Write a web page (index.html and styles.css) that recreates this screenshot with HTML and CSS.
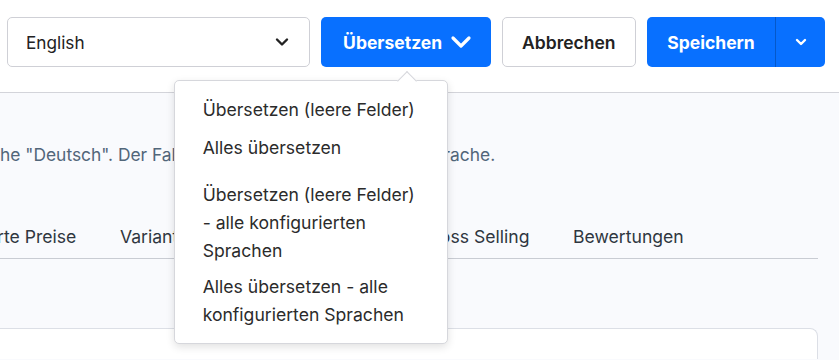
FILE: index.html
```html
<!DOCTYPE html>
<html lang="de">
<head>
    <meta charset="UTF-8">
    <meta name="viewport" content="width=device-width, initial-scale=1.0">
    <title>Produkt bearbeiten</title>
    <link rel="stylesheet" href="styles.css">
</head>
<body>
    <header class="toolbar">
        <div class="lang-select">
            <span>English</span>
            <svg class="lang-caret" width="14" height="10" viewBox="0 0 14 10"><path d="M2 2.5 L7 7.5 L12 2.5" fill="none" stroke="#222" stroke-width="2.4" stroke-linecap="round" stroke-linejoin="round"/></svg>
        </div>
        <div class="translate">
            <button class="btn btn-primary btn-translate">
                Übersetzen
                <svg width="22" height="14" viewBox="0 0 22 14"><path d="M3 3 L11 11 L19 3" fill="none" stroke="#fff" stroke-width="3.2" stroke-linecap="round" stroke-linejoin="round"/></svg>
            </button>
            <ul class="menu">
                <li>Übersetzen (leere Felder)</li>
                <li>Alles übersetzen</li>
                <li class="menu-group">Übersetzen (leere Felder) - alle konfigurierten Sprachen</li>
                <li>Alles übersetzen - alle konfigurierten Sprachen</li>
            </ul>
        </div>
        <button class="btn btn-default">Abbrechen</button>
        <div class="split">
            <button class="btn btn-primary split-main">Speichern</button>
            <button class="btn btn-primary split-toggle">
                <svg width="14" height="10" viewBox="0 0 14 10"><path d="M3 3 L7 7 L11 3" fill="none" stroke="#fff" stroke-width="2.4" stroke-linecap="round" stroke-linejoin="round"/></svg>
            </button>
        </div>
    </header>
    <main class="content">
        <div class="content-inner">
            <p class="lang-info">he "Deutsch". Der Fallback ist jeweils die Standard-Sprache.</p>
            <nav class="tabs">
                <span class="tab tab-first">rte Preise</span>
                <span class="tab">Varianten</span>
                <span class="tab">Layout</span>
                <span class="tab">SEO</span>
                <span class="tab">Cross Selling</span>
                <span class="tab">Bewertungen</span>
            </nav>
            <section class="card"></section>
        </div>
    </main>
</body>
</html>
```
FILE: styles.css
```css
/* Grundlayout */
body {
    margin: 0;
    font-family: 'Inter', 'Noto Sans', sans-serif;
    color: #2b2b2b;
    background: #f9fafd;
    overflow: hidden;
}

.toolbar {
    display: flex;
    gap: 11px;
    height: 50px;
    padding: 17px 14px 25px 7px;
    background: white;
    border-bottom: 1px solid #d3d4da;
}

.lang-select {
    width: 304px;
    box-sizing: border-box;
    display: flex;
    align-items: center;
    justify-content: space-between;
    padding: 0 20px 0 18px;
    border: 1px solid #cfd0d6;
    border-radius: 5px;
    font-size: 17.2px;
    color: #222;
}

.btn {
    font-family: inherit;
    font-size: 17.5px;
    height: 50px;
    border-radius: 5px;
    cursor: pointer;
}

.btn-primary {
    background-color: #0870ff;
    color: white;
    font-weight: 700;
    border: none;
}

.btn-default {
    width: 135px;
    background: white;
    color: #222;
    font-weight: 600;
    border: 1px solid #cfd0d6;
}

.translate {
    position: relative;
}

.btn-translate {
    width: 170px;
    display: flex;
    align-items: center;
    justify-content: center;
    gap: 8px;
    padding: 0 0 0 4px;
}

.split {
    display: flex;
}

.split-main {
    width: 129px;
    border-radius: 5px 0 0 5px;
    border-right: 1px solid #0558c9;
}

.split-toggle {
    width: 49px;
    border-radius: 0 5px 5px 0;
    display: flex;
    align-items: center;
    justify-content: center;
    padding: 0;
}

/* Dropdown-Menü */
.menu {
    position: absolute;
    top: 63px;
    left: -147px;
    width: 274px;
    box-sizing: border-box;
    margin: 0;
    padding: 10px 0 9px;
    list-style: none;
    background: white;
    border: 1px solid #d6d7dc;
    border-radius: 5px;
    box-shadow: 0 3px 8px rgba(0, 0, 0, 0.12);
    z-index: 10;
}

.menu::before {
    content: '';
    position: absolute;
    top: -8px;
    left: 225px;
    width: 13px;
    height: 13px;
    background: white;
    border-left: 1px solid #d6d7dc;
    border-top: 1px solid #d6d7dc;
    transform: rotate(45deg);
    margin-top: 1px;
}

.menu li {
    position: relative;
    padding: 5px 28px;
    font-size: 17.6px;
    line-height: 28px;
    color: #2b2b2b;
}

.menu .menu-group {
    margin-top: 9px;
    padding-bottom: 3px;
}

/* Inhalt */
.content {
    background: #f9fafd;
}

.content-inner {
    margin-right: 21px;
    padding-top: 50px;
}

.lang-info {
    margin: 0;
    font-size: 17.4px;
    line-height: 24px;
    color: #52667a;
}

.tabs {
    display: flex;
    margin-top: 49px;
    border-bottom: 1px solid #c9ccd3;
}

.tab {
    padding: 9px 21.8px;
    font-size: 17.6px;
    line-height: 24px;
    color: #2f3640;
}

.tab-first {
    padding-left: 0;
    margin-left: -3px;
}

.card {
    margin-top: 69px;
    height: 30px;
    background: white;
    border: 1px solid #dcdfe6;
    border-bottom: none;
    border-left: none;
    border-radius: 0 8px 0 0;
}
```
